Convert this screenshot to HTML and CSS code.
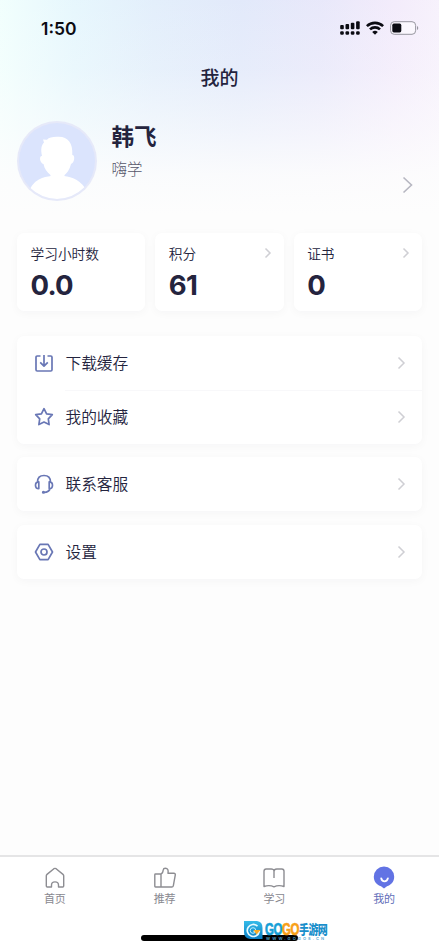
FILE: index.html
```
<!DOCTYPE html>
<html lang="zh-CN">
<head>
  <meta charset="UTF-8">
  <meta name="viewport" content="width=device-width, initial-scale=1.0">
  <title>我的</title>
  <link rel="stylesheet" href="styles.css">
</head>
<body>
  <div class="page">

    <div class="status-bar">
      <span class="time">1:50</span>
      <div class="status-icons">
        <svg width="20" height="14" viewBox="0 0 20 14">
          <g fill="#0b0b12">
            <rect x=".2" y="4" width="3.600" height="4.300" rx="1"/>
            <rect x="5.500" y="3" width="3.600" height="5.300" rx="1"/>
            <rect x="10.800" y="1.800" width="3.600" height="6.500" rx="1"/>
            <rect x="16.100" y=".3" width="3.600" height="8" rx="1"/>
            <rect x=".2" y="10.200" width="3.600" height="3.600" rx="1.200"/>
            <rect x="5.500" y="10.200" width="3.600" height="3.600" rx="1.200"/>
            <rect x="10.800" y="10.200" width="3.600" height="3.600" rx="1.200"/>
            <rect x="16.100" y="10.200" width="3.600" height="3.600" rx="1.200"/>
          </g>
        </svg>
        <svg class="wifi" width="18" height="14" viewBox="0 0 18 14">
          <g fill="none" stroke="#0b0b12" stroke-width="2.6">
            <path d="M.9 5.100a11.700 11.700 0 0 1 16.200 0"/>
            <path d="M4 8.400a7.200 7.200 0 0 1 10 0"/>
          </g>
          <path d="M9 13.800L6.200 11a4 4 0 0 1 5.600 0z" fill="#0b0b12"/>
        </svg>
        <svg class="battery" width="29" height="14" viewBox="0 0 29 14">
          <rect x=".6" y=".7" width="25" height="12.600" rx="3.600" fill="#fff" fill-opacity=".5" stroke="#97969f"/>
          <rect x="2.300" y="2.600" width="9" height="8.800" rx="1.600" fill="#0b0b12"/>
          <path d="M27 5v4c1.700-.6 1.700-3.400 0-4z" fill="#97969f"/>
        </svg>
      </div>
    </div>

    <h1 class="title">我的</h1>

    <div class="profile">
      <svg class="avatar" width="80" height="80" viewBox="0 0 80 80">
        <defs>
          <clipPath id="face"><circle cx="40" cy="40" r="38"/></clipPath>
        </defs>
        <circle cx="40" cy="40" r="40" fill="#e6e9f9"/>
        <circle cx="40" cy="40" r="38" fill="#dbe4fd"/>
        <g fill="#fff" clip-path="url(#face)">
          <path d="M25 35C23.500 28 24.500 24 27 21.500L26 18.500L30 18.800C32 16 37 15.500 42 15.800C51 16 56 22 55.300 34C58.500 34 57.500 42 54 43C52.500 49 50 52 47.500 54V57H33.500V54C30 51 27.500 48 26.500 43C22.500 42 22 34.500 25 35z"/>
          <path d="M12 71C16 58 27 56 34 55H47C55 56 64 59 70 70L62 82H19z"/>
        </g>
      </svg>
      <div class="user">
        <div class="name">韩飞</div>
        <div class="org">嗨学</div>
      </div>
      <svg class="profile-arrow" width="12" height="18" viewBox="0 0 12 18"><path d="M1.500 1.500L9.500 9L1.500 16.500"/></svg>
    </div>

    <div class="stats">
      <div class="card stat">
        <div class="stat-label">学习小时数</div>
        <div class="stat-value">0.0</div>
      </div>
      <div class="card stat">
        <div class="stat-label">积分
          <svg class="arrow" width="8" height="12" viewBox="0 0 8 12"><path d="M1.500 1.500L6 6L1.500 10.500"/></svg>
        </div>
        <div class="stat-value">61</div>
      </div>
      <div class="card stat">
        <div class="stat-label">证书
          <svg class="arrow" width="8" height="12" viewBox="0 0 8 12"><path d="M1.500 1.500L6 6L1.500 10.500"/></svg>
        </div>
        <div class="stat-value">0</div>
      </div>
    </div>

    <div class="menu">
      <div class="card">
        <div class="row">
          <svg class="row-icon" width="20" height="20" viewBox="0 0 20 20"><path d="M6.500 3H3.200Q2 3 2 4.200V16.800Q2 18 3.200 18H16.800Q18 18 18 16.800V4.200Q18 3 16.800 3H13.500M10 2V13M6.200 9.400L10 13.200L13.800 9.400"/></svg>
          <span>下载缓存</span>
          <svg class="arrow" width="9" height="14" viewBox="0 0 9 14"><path d="M1.500 1.500L7 7L1.500 12.500"/></svg>
        </div>
        <div class="row divided">
          <svg class="row-icon" width="20" height="20" viewBox="0 0 20 20"><path d="M10 1.700L12.600 6.800L18.300 7.700L14.300 11.900L15.100 17.600L10 15.100L4.900 17.600L5.700 11.900L1.700 7.700L7.400 6.800z"/></svg>
          <span>我的收藏</span>
          <svg class="arrow" width="9" height="14" viewBox="0 0 9 14"><path d="M1.500 1.500L7 7L1.500 12.500"/></svg>
        </div>
      </div>
      <div class="card">
        <div class="row">
          <svg class="row-icon" width="20" height="20" viewBox="0 0 20 20"><path d="M3.500 8C3.500 4 6 1.500 10 1.500S16.500 4 16.500 8M4.800 7.800V14.600C2.500 14.600 1.500 13.200 1.500 11.200S2.500 7.800 4.800 7.800zM15.200 7.800V14.600C17.500 14.600 18.500 13.200 18.500 11.200S17.500 7.800 15.200 7.800zM16 14.500C15.500 17 13.500 18.300 10 18.300"/><circle cx="9.400" cy="18.300" r=".7"/></svg>
          <span>联系客服</span>
          <svg class="arrow" width="9" height="14" viewBox="0 0 9 14"><path d="M1.500 1.500L7 7L1.500 12.500"/></svg>
        </div>
      </div>
      <div class="card">
        <div class="row">
          <svg class="row-icon" width="20" height="20" viewBox="0 0 20 20"><path d="M5.900 2.300H14.100L18.500 10L14.100 17.700H5.900L1.500 10z"/><circle cx="10" cy="10" r="3"/></svg>
          <span>设置</span>
          <svg class="arrow" width="9" height="14" viewBox="0 0 9 14"><path d="M1.500 1.500L7 7L1.500 12.500"/></svg>
        </div>
      </div>
    </div>

    <div class="tab-bar">
      <div class="tab">
        <svg width="24" height="24" viewBox="0 0 24 24"><path d="M3.300 9.800Q3.300 9 4 8.400L10.900 2.700Q12 2 13.100 2.700L20 8.400Q20.700 9 20.700 9.800V20Q20.700 21 19.700 21H15.500V19C15.500 14.800 8.500 14.800 8.500 19V21H4.300Q3.300 21 3.300 20z"/></svg>
        <span>首页</span>
      </div>
      <div class="tab">
        <svg width="24" height="24" viewBox="0 0 24 24"><path d="M2.500 8H8V21H2.500Q1.800 21 1.800 20.300V8.700Q1.800 8 2.500 8zM8 8C9.800 7.500 10 6 10.200 4C10.400 2.600 11.200 2.200 12.300 2.200C14.800 2.200 15.500 4 15 7.300H20.900Q22.500 7.300 22.300 8.800L20.300 19.800Q20 21 18.800 21H8"/></svg>
        <span>推荐</span>
      </div>
      <div class="tab">
        <svg width="24" height="24" viewBox="0 0 24 24"><path d="M12 12V5.500C12 3.700 10.800 3 9.200 3H4.200Q2 3 2 5.200V20.500C5.500 19.300 9 19.300 12 20.900C15 19.300 18.500 19.300 22 20.500V5.200Q22 3 19.800 3H14.800C13.200 3 12 3.700 12 5.500"/></svg>
        <span>学习</span>
      </div>
      <div class="tab active">
        <svg width="24" height="24" viewBox="0 0 24 24"><path class="fill" d="M12 .6A10.200 10.200 0 0 1 22.200 10.800C22.200 16 18.800 19 15 20.300L12 22.500L9 20.300C5.200 19 1.800 16 1.800 10.800A10.200 10.200 0 0 1 12 .6z"/><path class="smile" d="M9.200 12.300C10 16.300 15 16.300 15.900 12.300"/></svg>
        <span>我的</span>
      </div>
    </div>

    <div class="home-indicator"></div>

    <!-- site mark sits over the home indicator -->
    <div class="site-mark">
      <svg width="20" height="20" viewBox="0 0 20 20">
        <defs>
          <linearGradient id="blue" x1="0" y1="0" x2="0" y2="1">
            <stop offset="0" stop-color="#35bce9"/>
            <stop offset="1" stop-color="#087cc2"/>
          </linearGradient>
        </defs>
        <path d="M1 1H14Q19.500 1.500 19.500 8V19H7Q1 18 1 12z" fill="url(#blue)"/>
        <path d="M14.500 6.200A6 6 0 1 0 16.200 11.500H10.500" fill="none" stroke="#e7faff" stroke-width="1.700"/>
        <circle cx="10" cy="10.500" r="2.800" fill="none" stroke="#b8efff"/>
        <path d="M10.500 10H17.500L13.500 14.500z" fill="#f7aa27"/>
      </svg>
      <div class="mark-text">
        <div class="mark-name">
          <span class="mark-blue">GO</span>
          <span class="mark-orange">GO</span>
          <span class="mark-cn">手游网</span>
        </div>
        <div class="mark-url">WWW.GOGOS.CN</div>
      </div>
    </div>
  </div>
</body>
</html>
```
FILE: styles.css
```
* {
  box-sizing: border-box;
}

body {
  margin: 0;
  background: #fdfdfd;
  font-family: Inter, "Noto Sans CJK SC", sans-serif;
  color: #24243e;
}

svg {
  display: block;
  flex-shrink: 0;
}

.page {
  position: relative;
  width: 439px;
  height: 950px;
  overflow: hidden;
  display: flex;
  flex-direction: column;
  background:
    linear-gradient(to bottom, rgba(253, 253, 253, 0.1) 0, rgba(253, 253, 253, 0.25) 70px, rgba(253, 253, 253, 0.6) 130px, rgba(253, 253, 253, 0.9) 175px, #fdfdfd 215px),
    linear-gradient(to right, #f0fffd 0, #e4f6fd 17%, #e0edfb 35%, #dfe7fa 55%, #e6e6fa 73%, #f2eafb 90%, #f6f0fc 100%);
}

/* status bar */
.status-bar {
  height: 56px;
  padding: 0 20px 0 41px;
  display: flex;
  align-items: center;
  justify-content: space-between;
}

.time {
  font-size: 17.5px;
  font-weight: 600;
  color: #0b0b12;
}

.status-icons {
  display: flex;
  align-items: center;
}

.wifi {
  margin-left: 6px;
}

.battery {
  margin-left: 6px;
}

.title {
  margin: 0;
  height: 44px;
  line-height: 46px;
  text-align: center;
  font-size: 19px;
  font-weight: 500;
}

/* user info */
.profile {
  height: 133px;
  padding: 21px 25px 0 17px;
  display: flex;
}

.user {
  flex: 1;
  margin-left: 14.6px;
}

.name {
  height: 30px;
  line-height: 32px;
  font-size: 22.5px;
  font-weight: 700;
}

.org {
  margin-top: 8px;
  line-height: 22px;
  font-size: 15.5px;
  font-weight: 300;
  color: #55556a;
}

.profile-arrow {
  margin-top: 55px;
  fill: none;
  stroke: #b6b6c1;
  stroke-width: 1.6;
}

.card {
  background: #fff;
  border-radius: 7px;
  box-shadow: 0 2px 10px rgba(30, 30, 60, 0.035);
}

/* counters */
.stats {
  padding: 0 17px;
  display: grid;
  grid-template-columns: repeat(3, 1fr);
  gap: 10px;
}

.stat {
  height: 78px;
  padding: 9px 12px 0 13.5px;
}

.stat-label {
  height: 22px;
  display: flex;
  align-items: center;
  justify-content: space-between;
  font-size: 13.7px;
  font-weight: 350;
}

.stat-value {
  height: 38px;
  line-height: 42px;
  font-size: 27.5px;
  font-weight: 700;
  letter-spacing: -0.8px;
}

.arrow {
  fill: none;
  stroke: #cfcfd4;
  stroke-width: 1.5;
}

/* menu list */
.menu {
  padding: 25px 17px 0;
  display: flex;
  flex-direction: column;
  gap: 13.8px;
}

.row {
  position: relative;
  height: 53.8px;
  padding: 0 16px 0 17px;
  display: flex;
  align-items: center;
  font-size: 15.7px;
  font-weight: 350;
}

.row span {
  flex: 1;
  margin: -1px 0 0 11.5px;
}

.row-icon {
  fill: none;
  stroke: #6977b5;
  stroke-width: 1.7;
  stroke-linejoin: round;
}

.divided::before {
  content: "";
  position: absolute;
  top: 0;
  left: 48px;
  right: 0;
  height: 1px;
  background: #f8f8fa;
}

/* bottom navigation */
.tab-bar {
  margin-top: auto;
  height: 95px;
  border-top: 2px solid #e5e5e6;
  padding-top: 9px;
  display: grid;
  grid-template-columns: repeat(4, 1fr);
  background: #fff;
}

.tab {
  display: flex;
  flex-direction: column;
  align-items: center;
  font-size: 11px;
  line-height: 18px;
  color: #88888f;
}

.tab svg {
  fill: none;
  stroke: #8d8d92;
  stroke-width: 1.4;
  stroke-linejoin: round;
}

.active {
  color: #626eb9;
}

.tab .fill {
  fill: #6273e4;
  stroke: none;
}

.tab .smile {
  stroke: #fff;
  stroke-width: 1.8;
  stroke-linecap: round;
}

.home-indicator {
  position: absolute;
  left: 141px;
  top: 935px;
  width: 157px;
  height: 6px;
  border-radius: 3px;
  background: #000;
}

.site-mark {
  position: absolute;
  left: 243px;
  top: 920px;
  display: flex;
}

.mark-text {
  margin-left: 2px;
  white-space: nowrap;
}

.mark-name {
  display: flex;
  height: 16px;
  line-height: 18px;
}

.mark-blue,
.mark-orange {
  width: 17px;
  font-family: "Liberation Sans", sans-serif;
  font-size: 11.5px;
  font-weight: 700;
  letter-spacing: -0.5px;
  color: #169fd7;
  -webkit-text-stroke: 0.5px;
  transform: scaleY(1.4);
}

.mark-orange {
  color: #f8a018;
}

.mark-cn {
  font-size: 10px;
  font-weight: 900;
  letter-spacing: -0.6px;
  color: #198fcb;
  transform: scaleY(1.3);
}

.mark-url {
  margin-left: 1px;
  font-size: 4px;
  line-height: 5px;
  font-weight: 600;
  letter-spacing: 2.1px;
  color: #55a8d3;
}
```
